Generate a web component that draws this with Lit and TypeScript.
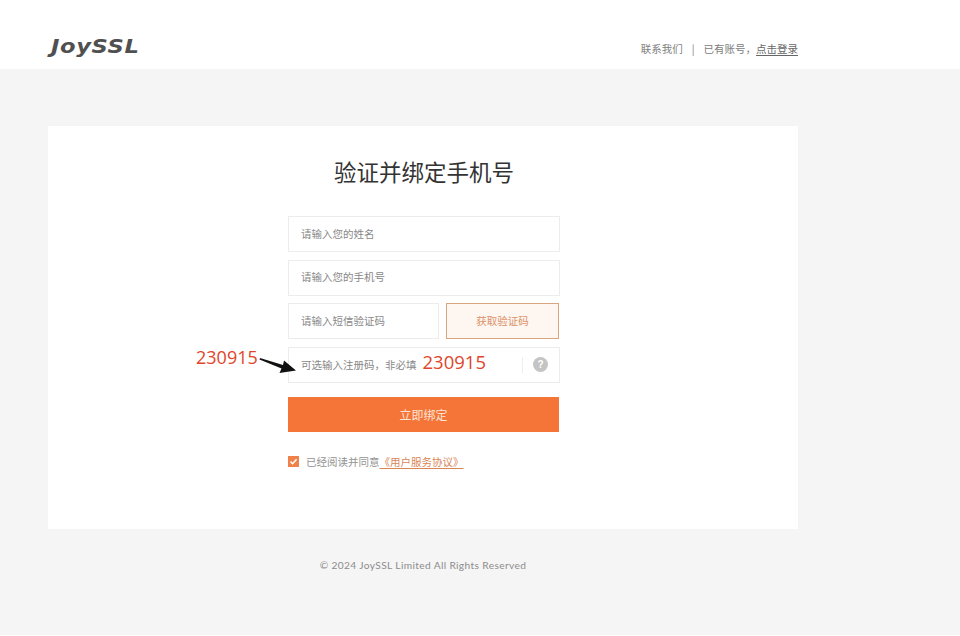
import { LitElement, html, css } from "lit";
import { customElement } from "lit/decorators.js";

@customElement("app-root")
export class AppRoot extends LitElement {
  static styles = css`
    :host {
      display: block;
      width: 960px;
      height: 636px;
      overflow: hidden;
      position: relative;
      background: #f5f5f5;
      font-family: "Noto Sans CJK SC", "Liberation Sans", sans-serif;
      color: #666;
    }
    * { box-sizing: border-box; }
    .header {
      height: 69px;
      background: #fff;
      display: flex;
      align-items: center;
      justify-content: space-between;
      padding: 27px 162px 0 48px;
    }
    .logo {
      font-family: "DejaVu Sans", sans-serif;
      font-weight: 700;
      font-style: italic;
      font-size: 19px;
      line-height: 22px;
      color: #505050;
      letter-spacing: 0.5px;
      margin: -5px 0 0 3px;
      white-space: nowrap;
      transform: scaleX(1.19);
      transform-origin: left center;
    }
    .links {
      font-size: 10.5px;
      color: #808080;
      display: flex;
      align-items: center;
    }
    .sep { margin: 0 9px; color: #808080; }
    .links u { color: #666; text-underline-offset: 2px; }
    .card {
      margin: 57px 162px 0 48px;
      height: 403px;
      background: #fff;
      display: flex;
      flex-direction: column;
      padding-left: 240px;
    }
    h1 {
      margin: 27px 0 0 0;
      width: 272px;
      height: 37px;
      text-align: center;
      font-size: 22.5px;
      line-height: 37px;
      font-weight: 400;
      color: #333;
    }
    .form {
      margin-top: 26px;
      width: 272px;
      display: flex;
      flex-direction: column;
      gap: 7.67px;
    }
    .field {
      height: 36px;
      border: 1px solid #ececec;
      background: #fff;
      font-size: 10.5px;
      color: #888;
      padding: 0 12px 2px;
      display: flex;
      align-items: center;
    }
    .row { display: flex; gap: 7px; height: 36px; width: 271px; }
    .row .field { width: 151px; }
    .send {
      flex: 1;
      border: 1px solid #d9a57f;
      background: #fdf6f1;
      color: #dc9168;
      font-size: 10.5px;
      padding-bottom: 2px;
      display: flex;
      align-items: center;
      justify-content: center;
    }
    .opt { justify-content: space-between; padding-right: 11px; padding-bottom: 0; }
    .opt .hint { display: flex; align-items: center; font-size: 10.5px; color: #888; }
    .opt .code {
      font-family: "Open Sans", "Liberation Sans", sans-serif;
      font-size: 18.5px;
      color: #e0452c;
      margin-left: 6px;
      line-height: 24px;
      margin-top: -5px;
    }
    .help { display: flex; align-items: center; }
    .vline { width: 1px; height: 16px; background: #eee; margin-right: 10px; }
    .q {
      width: 15px;
      height: 15px;
      border-radius: 50%;
      background: #c4c4c4;
      color: #fff;
      font-family: "Liberation Sans", sans-serif;
      font-weight: 700;
      font-size: 10px;
      line-height: 15px;
      text-align: center;
    }
    .submit {
      margin-top: 14px;
      width: 271px;
      height: 35px;
      background: #f47537;
      color: #fbe3d4;
      font-size: 12px;
      display: flex;
      align-items: center;
      justify-content: center;
    }
    .agree {
      margin-top: 23px;
      display: flex;
      align-items: center;
      font-size: 10.5px;
      color: #939393;
      height: 14px;
    }
    .check {
      width: 11px;
      height: 11px;
      background: #ef8149;
      margin-right: 7px;
      display: flex;
      align-items: center;
      justify-content: center;
    }
    .agree u { color: #d98556; text-underline-offset: 2px; }
    .footer {
      margin: 28px 162px 0 48px;
      text-align: center;
      font-family: "Lato", "Liberation Sans", sans-serif;
      font-size: 10.2px;
      line-height: 16px;
      color: #8c8c8c;
      letter-spacing: 0.36px;
    }
    .note {
      position: absolute;
      left: 196px;
      top: 345px;
      font-family: "Open Sans", "Liberation Sans", sans-serif;
      font-size: 18px;
      line-height: 25px;
      color: #e0452c;
    }
    .arrow { position: absolute; left: 258px; top: 355px; }
    .edge { position: absolute; left: 0; right: 0; bottom: 0; height: 1px; background: #fff; }
  `;

  render() {
    return html`
      <div class="header">
        <div class="logo">JoySSL</div>
        <div class="links">
          <span>联系我们</span><span class="sep">|</span><span>已有账号，</span><u>点击登录</u>
        </div>
      </div>
      <div class="card">
        <h1>验证并绑定手机号</h1>
        <div class="form">
          <div class="field">请输入您的姓名</div>
          <div class="field">请输入您的手机号</div>
          <div class="row">
            <div class="field">请输入短信验证码</div>
            <div class="send">获取验证码</div>
          </div>
          <div class="field opt">
            <span class="hint">可选输入注册码，非必填<span class="code">230915</span></span>
            <span class="help"><span class="vline"></span><span class="q">?</span></span>
          </div>
        </div>
        <div class="submit">立即绑定</div>
        <div class="agree">
          <span class="check">
            <svg width="9" height="9" viewBox="0 0 9 9"><path d="M1.5 4.6 3.6 6.7 7.6 2.2" fill="none" stroke="#fff" stroke-width="1.5"/></svg>
          </span>
          <span>已经阅读并同意</span><u>《用户服务协议》</u>
        </div>
      </div>
      <div class="footer">© 2024 JoySSL Limited All Rights Reserved</div>
      <div class="note">230915</div>
      <svg class="arrow" width="40" height="22" viewBox="0 0 40 22">
        <path d="M2 3 L25 10 L26 5.5 L38 15.5 L21.5 18 L23.5 13.5 L1.5 4.5 Z" fill="#111"/>
      </svg>
      <div class="edge"></div>
    `;
  }
}
